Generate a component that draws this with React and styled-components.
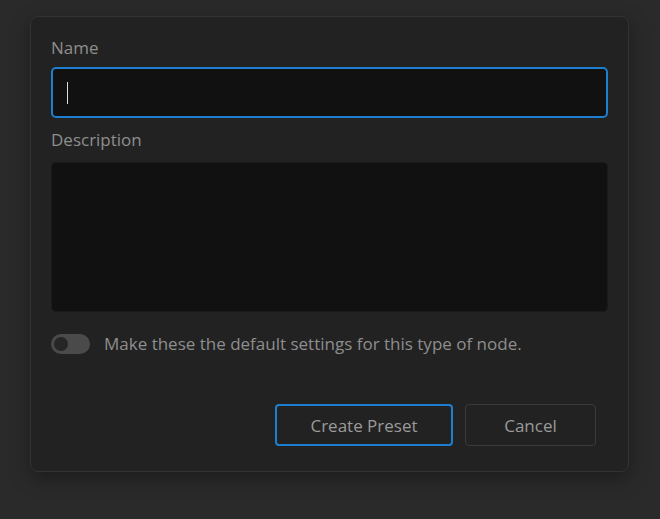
import React from "react";
import styled, { createGlobalStyle } from "styled-components";

const G = createGlobalStyle`
  html,body{margin:0;background:#2a2a2a;font-family:"Open Sans","Noto Sans",sans-serif;}
  *{box-sizing:border-box;}
`;
const Page = styled.div`width:660px;height:519px;padding:16px 0 0 30px;`;
const Dialog = styled.div`
  width:599px;height:456px;background:#222222;border:1px solid #333;border-radius:8px;
  box-shadow:0 6px 20px rgba(0,0,0,.35);padding:24px 20px 0 20px;display:flex;flex-direction:column;
`;
const Label = styled.div`color:#8e8e8e;font-size:17px;line-height:14px;height:14px;margin-bottom:${p=>p.$mb}px;`;
const Input = styled.div`
  height:${p=>p.$h}px;background:#111;border-radius:5px;
  border:${p=>p.$focus?"2px solid #1e7fd0":"1px solid #1a1a1a"};
  display:flex;align-items:center;padding-left:14px;margin-bottom:${p=>p.$mb}px;
`;
const Caret = styled.div`width:1px;height:22px;background:#ddd;`;
const Row = styled.div`display:flex;align-items:center;gap:14px;`;
const Toggle = styled.div`
  width:39px;height:20px;border-radius:10px;background:#4a4a4a;padding:3px;
  &::after{content:"";display:block;width:14px;height:14px;border-radius:50%;background:#262626;}
`;
const Text = styled.div`color:#8e8e8e;font-size:17px;`;
const Buttons = styled.div`display:flex;justify-content:flex-end;gap:12px;margin-top:49px;padding-right:12px;`;
const Btn = styled.button`
  width:${p=>p.$w}px;height:42px;background:#222;border-radius:4px;font:inherit;font-size:17px;color:#9a9a9a;
  border:${p=>p.$primary?"2px solid #1e7fd0":"1px solid #3a3a3a"};
`;

export default function App(){
  return <><G/><Page><Dialog>
    <Label $mb={12}>Name</Label>
    <Input $h={51} $focus $mb={15}><Caret/></Input>
    <Label $mb={15}>Description</Label>
    <Input $h={150} $mb={20}/>
    <Row><Toggle/><Text>Make these the default settings for this type of node.</Text></Row>
    <Buttons><Btn $w={178} $primary>Create Preset</Btn><Btn $w={131}>Cancel</Btn></Buttons>
  </Dialog></Page></>;
}
